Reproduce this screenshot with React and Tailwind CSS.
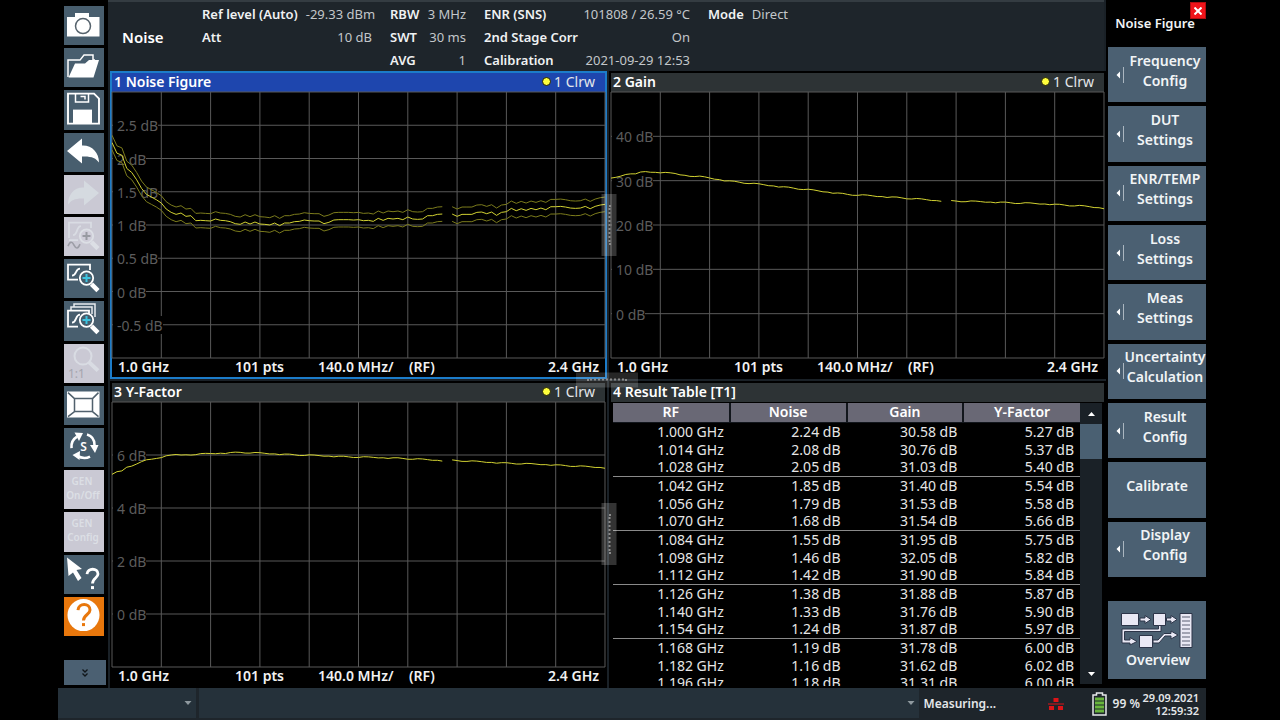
import React from "react";

const CORE = [
  [1.0, 2.24, 30.58, 5.27], [1.014, 2.08, 30.76, 5.37], [1.028, 2.05, 31.03, 5.4],
  [1.042, 1.85, 31.4, 5.54], [1.056, 1.79, 31.53, 5.58], [1.07, 1.68, 31.54, 5.66],
  [1.084, 1.55, 31.95, 5.75], [1.098, 1.46, 32.05, 5.82], [1.112, 1.42, 31.9, 5.84],
  [1.126, 1.38, 31.88, 5.87], [1.14, 1.33, 31.76, 5.9], [1.154, 1.24, 31.87, 5.97],
  [1.168, 1.19, 31.78, 6.0], [1.182, 1.16, 31.62, 6.02], [1.196, 1.18, 31.31, 6.0],
];

const NOISE = [
  ...CORE.slice(0, 14).map((r) => r[1]),
  1.18, 1.13, 1.14, 1.065, 1.07, 1.065, 1.06, 1.09, 1.07, 1.065, 1.05, 1.02, 1.01, 1.045, 1.015, 1.045, 1.015,
  1.01, 1.0, 1.03, 0.99, 1.03, 1.03, 1.05, 1.055, 1.075, 1.065, 1.06, 1.06, 1.02, 1.04, 1.075, 1.08, 1.08,
  1.08, 1.075, 1.08, 1.065, 1.07, 1.055, 1.1, 1.07, 1.1, 1.09, 1.1, 1.08, 1.12, 1.09, 1.085, 1.09, 1.14, 1.14,
  1.16, 1.165, null, 1.165, 1.13, 1.16, 1.16, 1.16, 1.19, 1.195, 1.17, 1.195, 1.145, 1.19, 1.2, 1.25, 1.215,
  1.245, 1.22, 1.25, 1.23, 1.255, 1.23, 1.275, 1.275, 1.28, 1.27, 1.255, 1.25, 1.255, 1.28, 1.245, 1.28, 1.3, 1.31,
];

const WOBBLE = [0, 1, -1, 0.5, -0.5, 1, 0, -1, 0.3, -0.6, 0.8];

function series(column, anchors, wobble) {
  const known = CORE.map((r) => r[column]);
  return Array.from({ length: 101 }, (_, k) => {
    if (k < known.length) return known[k];
    if (k === 68) return null;
    const i = anchors.findIndex((a) => a[0] >= k);
    const [x1, y1] = anchors[i];
    const [x0, y0] = i > 0 ? anchors[i - 1] : [known.length - 1, known[known.length - 1]];
    return y0 + ((y1 - y0) * (k - x0)) / (x1 - x0) + WOBBLE[(k * 7) % WOBBLE.length] * wobble;
  });
}

const GAIN = series(2, [[18, 30.9], [24, 29.9], [38, 28.2], [48, 26.9], [58, 26.2], [66, 25.5], [70, 25.4], [79, 25.1], [89, 24.7], [95, 24.3], [100, 23.8]], 0.13);
const YFACTOR = series(3, [[20, 6.05], [26, 6.1], [38, 6.0], [48, 5.93], [58, 5.88], [67, 5.79], [69, 5.8], [79, 5.7], [89, 5.63], [100, 5.52]], 0.02);

function toPath(values, max, min, offset = 0) {
  let pen = "M";
  let d = "";
  values.forEach((v, k) => {
    if (v === null) {
      pen = "M";
      return;
    }
    d += `${pen}${k} ${(((max - v - offset) / (max - min)) * 100).toFixed(2)}`;
    pen = "L";
  });
  return d;
}

function Plot({ max, min, step, children }) {
  const rows = Math.round((max - min) / step);
  const ticks = Array.from({ length: rows - 1 }, (_, i) => max - step * (i + 1));
  const at = (v) => ((max - v) / (max - min)) * 100;
  return (
    <div className="relative min-h-0 flex-1">
      <svg className="absolute inset-0 h-full w-full overflow-visible" viewBox="0 0 100 100" preserveAspectRatio="none" stroke="#595959" fill="none" aria-hidden="true">
        {Array.from({ length: 11 }, (_, i) => (
          <path key={i} d={`M${i * 10} 0V100`} vectorEffect="non-scaling-stroke" />
        ))}
        {[max, ...ticks, min].map((v) => (
          <path key={v} d={`M0 ${at(v)}H100`} vectorEffect="non-scaling-stroke" />
        ))}
      </svg>
      {ticks.map((v) => (
        <span key={v} className="absolute left-px -translate-y-1/2 bg-black pt-0.5 pl-1 text-[14px] leading-4 whitespace-nowrap text-[#5c5c5c]" style={{ top: `${at(v)}%` }}>
          {v} dB
        </span>
      ))}
      <svg className="absolute inset-0 h-full w-full" viewBox="0 0 100 100" preserveAspectRatio="none" fill="none" aria-hidden="true">
        {children}
      </svg>
    </div>
  );
}

function Trace({ d, dim }) {
  return <path d={d} stroke={dim ? "#7c7c1c" : "#d2d232"} strokeWidth="1" vectorEffect="non-scaling-stroke" />;
}

function Window({ title, trace, active, children }) {
  return (
    <section className={active ? "flex min-h-0 min-w-0 flex-col border-2 border-[#1c7cc9] bg-black" : "flex min-h-0 min-w-0 flex-col border-2 border-black bg-black"}>
      <header className={active ? "flex h-[19px] shrink-0 items-center justify-between bg-[#1e46ae] pr-2.5 pb-0.5 pl-0.5" : "flex h-[19px] shrink-0 items-center justify-between bg-[#2d3335] pr-2.5 pb-0.5 pl-0.5"}>
        <h2 className="text-[14px] leading-[17px] font-semibold text-white">{title}</h2>
        {trace && (
          <span className="flex items-center gap-[3px] text-[14px] leading-[17px] text-[#e4e6ea]">
            <svg className="size-[9px]" viewBox="0 0 9 9" aria-hidden="true">
              <circle cx="4.5" cy="4.5" r="4" fill="#ffff3c" stroke="#1c1c08" />
            </svg>
            {trace}
          </span>
        )}
      </header>
      {children}
    </section>
  );
}

function FrequencyAxis() {
  return (
    <footer className="flex h-[19px] shrink-0 items-center px-1.5 pb-px text-[14px] leading-[18px] font-semibold whitespace-nowrap text-[#f2f2f2]">
      <span className="w-[117px]">1.0 GHz</span>
      <span className="w-[83px]">101 pts</span>
      <span className="w-[91px]">140.0 MHz/</span>
      <span>(RF)</span>
      <span className="ml-auto">2.4 GHz</span>
    </footer>
  );
}

function ResultTable() {
  const cell = (v, n, unit) => `${v.toFixed(n)} ${unit}`;
  return (
    <div className="flex min-h-0 flex-1 pt-px pr-0.5 pl-0.5">
      <div className="relative min-h-0 flex-1 overflow-hidden">
        <table className="absolute inset-x-0 top-0 w-full table-fixed border-collapse text-[14px] leading-[17px] text-[#e6e6e6]">
          <thead>
            <tr className="h-[19px] bg-[#696875] leading-[18px] text-white">
              {["RF", "Noise", "Gain", "Y-Factor"].map((h) => (
                <th key={h} scope="col" className="border-r-2 border-b border-[#12161c] p-0 font-semibold last:border-r-0">{h}</th>
              ))}
            </tr>
          </thead>
          <tbody>
            {CORE.map((r, i) => (
              <tr key={r[0]} className={i % 3 === 2 ? "h-[18px] border-b border-[#8a8a8a] text-right" : "h-[18px] text-right"}>
                <td className="p-0 pr-1.5">{cell(r[0], 3, "GHz")}</td>
                <td className="p-0 pr-1.5">{cell(r[1], 2, "dB")}</td>
                <td className="p-0 pr-1.5">{cell(r[2], 2, "dB")}</td>
                <td className="p-0 pr-1.5">{cell(r[3], 2, "dB")}</td>
              </tr>
            ))}
          </tbody>
        </table>
      </div>
      <div className="mb-0.5 flex w-[22px] flex-col bg-[#1a2127]">
        <button aria-label="Scroll up" className="flex h-[21px] items-center justify-center">
          <svg className="h-1 w-[7px]" viewBox="0 0 7 4"><path d="M0 4L3.500 0L7 4Z" fill="#fff" /></svg>
        </button>
        <div className="h-[35px] bg-[#4a6072]" />
        <button aria-label="Scroll down" className="mt-auto flex h-5 items-center justify-center">
          <svg className="h-1 w-[7px]" viewBox="0 0 7 4"><path d="M0 0L3.500 4L7 0Z" fill="#fff" /></svg>
        </button>
      </div>
    </div>
  );
}

function Readout({ className, rows }) {
  return (
    <dl className={className}>
      {rows.map(([k, v]) => (
        <div key={k} className="flex h-[23px] items-center justify-between gap-2 whitespace-nowrap">
          <dt className="font-semibold text-[#f0f2f3]">{k}</dt>
          <dd className="text-[#c3c7ca]">{v}</dd>
        </div>
      ))}
    </dl>
  );
}

const Lens = ({ plus, faded }) => (
  <>
    <path d="M27.500 25L34 31.500" stroke={faded ? "#dcdfe5" : "#fff"} strokeWidth="4.500" />
    <circle cx="22.500" cy="19" r="6.700" fill={faded ? "#cfcdd9" : "#465d6d"} stroke={faded ? "#dcdfe5" : "#fff"} strokeWidth="1.800" />
    {plus && <path d="M22.500 15V23M18.500 19H26.500" stroke={faded ? "#989aa2" : "#3fc4e0"} strokeWidth="2" />}
  </>
);

const TOOLS = [
  ["Screenshot", "normal", <>
    <path d="M3 11H11V7H25V11H35.500V30.500H3Z" fill="#fff" />
    <circle cx="19" cy="20" r="7.500" fill="#fff" stroke="#56636d" strokeWidth="1.500" />
  </>],
  ["Open", "normal", <>
    <path d="M4 29V12H16L20 7H29V12H31" fill="none" stroke="#fff" strokeWidth="1.500" />
    <path d="M11 15.500H21L25 12H35L29.500 29.500H4.500Z" fill="#fff" />
  </>],
  ["Save", "normal", <>
    <path d="M4 3.500H30L35 8.500V33.500H4Z" fill="none" stroke="#fff" strokeWidth="1.900" />
    <path d="M11.500 3.500V12H24.500V3.500M16.500 6.500H21V9.500" fill="none" stroke="#fff" strokeWidth="1.500" />
    <path d="M9 19.500H28V33.500H9Z" fill="#fff" />
  </>],
  ["Undo", "normal", <path d="M3 18L18 5.500V12.500C28 12 35 19.500 35 29.500C32 25 27 23 18 23.500V30.500Z" fill="#fff" />],
  ["Redo", "off", <path d="M35 18L20 5.500V12.500C10 12 4 19.500 4 29.500C7 25 12 23 20 23.500V30.500Z" fill="#d5dae0" />],
  ["Zoom trace", "off", <>
    <path d="M5 21V5.500H27V11M5 23H14M9 18C14 18 12 9 17 9" fill="none" stroke="#d9dce3" strokeWidth="1.800" />
    <Lens plus faded />
    <path d="M4 29C6 24 8 24 10 28C12 32 14 32 16 27" fill="none" stroke="#9c9da6" strokeWidth="1.600" />
  </>],
  ["Zoom", "normal", <>
    <path d="M14 20.500H4V5.500H26V11M8 16.500C13 16.500 11 9.500 16 9.500" fill="none" stroke="#fff" strokeWidth="1.800" />
    <Lens plus />
  </>],
  ["Multi zoom", "normal", <>
    <path d="M7 9V6H28V13M10 6V3H31V16" fill="none" stroke="#e8ecef" strokeWidth="1.500" />
    <path d="M14 25.500H4V9.500H25V12.500M8 21.500C13 21.500 11 13.500 16 13.500" fill="none" stroke="#fff" strokeWidth="1.800" />
    <Lens plus />
  </>],
  ["Zoom off", "off", <>
    <path d="M25 18L34 26.500" stroke="#d9dce3" strokeWidth="4" />
    <circle cx="19" cy="12" r="8.500" fill="none" stroke="#d9dce3" strokeWidth="2" />
    <text x="4" y="34" fontSize="12" fill="#a5a5ae">1:1</text>
  </>],
  ["Maximize window", "normal", <>
    <path d="M3 5.500H35.500V31.500H3Z" fill="#fff" />
    <path d="M10.500 12.500H28.500V25.500H10.500ZM4 6.500L10.500 12.500M34.500 6.500L28.500 12.500M4 30.500L10.500 25.500M34.500 30.500L28.500 25.500" fill="none" stroke="#51616d" strokeWidth="1.500" />
  </>],
  ["Sequencer", "normal", <>
    <path d="M7.500 20C7 15 9 11 13 8.500M23 6.500C28 8 30.500 12 30.500 17M26 28.500C22 30.500 17 30 13 27.500" fill="none" stroke="#fff" strokeWidth="2.600" />
    <path d="M10.500 4.500L19 5L15 13ZM34.500 17L31 25L26 17ZM16 23L8.500 27L15.500 32Z" fill="#fff" />
    <text x="19.500" y="23" fontSize="12" fontWeight="600" textAnchor="middle" fill="#fff">S</text>
  </>],
  ["GEN On/Off", "off", <g fill="#dcdfe5" fontSize="10" fontWeight="600" textAnchor="middle">
    <text x="18" y="15">GEN</text><text x="19" y="29">On/Off</text>
  </g>],
  ["GEN Config", "off", <g fill="#dcdfe5" fontSize="10" fontWeight="600" textAnchor="middle">
    <text x="18" y="15">GEN</text><text x="19" y="29">Config</text>
  </g>],
  ["Context help", "normal", <>
    <path d="M3 2.500L18 14L12.500 15L17.500 23L14 26L9 17.500L4.500 21Z" fill="#fff" />
    <path d="M23 19C23.500 12.500 34 12.500 34 19C34 23 28.500 23 28.500 28.500" fill="none" stroke="#fff" strokeWidth="2.800" />
    <path d="M27 31H30V34H27Z" fill="#fff" />
  </>],
  ["Help", "accent", <>
    <circle cx="19.500" cy="18" r="16" fill="#fff" />
    <path d="M14 13C14.500 5.500 26 5.500 26 13C26 17.500 19.500 17.500 19.500 23.500" fill="none" stroke="#e8770c" strokeWidth="3" />
    <path d="M18 26H21V29H18Z" fill="#e8770c" />
  </>],
];

const TOOL_STYLE = {
  normal: "flex items-center justify-center bg-[#485e6e]",
  off: "flex items-center justify-center bg-[#cac9d4]",
  accent: "flex items-center justify-center bg-[#e8770c]",
};

const SOFTKEYS = [
  ["Frequency", "Config"], ["DUT", "Settings"], ["ENR/TEMP", "Settings"], ["Loss", "Settings"], ["Meas", "Settings"],
  ["Uncertainty", "Calculation"], ["Result", "Config"], ["Calibrate"], ["Display", "Config"],
];

function Softkey({ lines }) {
  const single = lines.length === 1;
  return (
    <button className="flex min-h-0 items-center bg-[#4b6072] pl-2 text-[14px] leading-5 font-semibold text-[#f1f4f6]">
      {!single && (
        <svg className="h-4 w-2 shrink-0" viewBox="0 0 8 16" aria-hidden="true">
          <path d="M4 4.500V11.500L0.500 8Z" fill="#fff" />
          <path d="M7.500 0V16" stroke="#aab6c0" />
        </svg>
      )}
      <span className={single ? "flex-1 pr-2 pb-2" : "flex-1 pb-2"}>
        {lines.map((l) => <span key={l} className="block">{l}</span>)}
      </span>
    </button>
  );
}

function OverviewIcon() {
  return (
    <svg className="h-9 w-[74px]" viewBox="0 0 74 36" aria-hidden="true">
      <g stroke="#2c3448" fill="#e9e8f4">
        <path d="M1.500 1.500H18.500V13.500H1.500ZM33.500 1.500H45.500V13.500H33.500ZM19.500 23.500H32.500V35.500H19.500Z" />
        <path d="M60 1.500H72V35.500H60Z" />
        <path d="M20 6H25V3.500L31 7.500L25 11.500V9H20ZM46.500 6H51V3.500L57 7.500L51 11.500V9H46.500Z" />
        <path d="M38.500 13.500H41V19.500H4.500V28H10V25.500L17 29.500L10 33V31H2V17H38.500Z" />
        <path d="M33 28H38L44 21.500H51V19L58 23L51 27V24H45L39 31H33Z" />
      </g>
      <path d="M62 5H70M62 9H70M62 13H70M62 17H70M62 21H70M62 25H70M62 29H70M62 33H70" stroke="#5b5f73" />
    </svg>
  );
}

function StatusSelect({ label, className }) {
  return (
    <label className={className}>
      <select aria-label={label} className="h-full w-full appearance-none bg-[#25313a]">
        <option value="" />
      </select>
      <svg className="pointer-events-none absolute top-1/2 right-1 h-[5px] w-2 -translate-y-1/2" viewBox="0 0 8 5" aria-hidden="true"><path d="M0.500 0.500H7.500L4 4.500Z" fill="#8f999f" /></svg>
    </label>
  );
}

export default function App() {
  return (
    <div className="flex h-screen min-h-[640px] min-w-[1100px] flex-col bg-black pr-[74px] pl-[58px] font-['Noto_Sans','Open_Sans',sans-serif]">
      <div className="flex min-h-0 flex-1">
        <nav aria-label="Toolbar" className="flex w-[50px] shrink-0 flex-col pt-1.5 pr-0.5 pb-[3px] pl-1.5">
          <div className="grid min-h-0 flex-1 auto-rows-fr gap-[3px] pr-0.5">
            {TOOLS.map(([name, kind, art]) => (
              <button key={name} aria-label={name} disabled={kind === "off"} className={TOOL_STYLE[kind]}>
                <svg className="h-full w-full" viewBox="0 0 40 39">{art}</svg>
              </button>
            ))}
          </div>
          <button aria-label="More tools" className="mt-6 flex h-[25px] items-center justify-center bg-[#4b6072]">
            <svg className="h-2 w-1.5" viewBox="0 0 6 8"><path d="M0.500 0.500L3 3L5.500 0.500M0.500 4.500L3 7L5.500 4.500" fill="none" stroke="#10161a" strokeWidth="1.300" /></svg>
          </button>
        </nav>

        <main className="flex min-w-0 flex-1 flex-col bg-[#1a2127]">
          <header className="mr-0.5 flex h-[71px] shrink-0 items-stretch gap-[18px] border-t-2 border-[#343c42] bg-[#1e252b] text-[13px] leading-[18px]">
            <h1 className="w-[76px] self-center pl-3.5 text-[15px] font-semibold text-white">Noise</h1>
            <Readout className="w-[170px]" rows={[["Ref level (Auto)", "-29.33 dBm"], ["Att", "10 dB"]]} />
            <Readout className="w-[76px]" rows={[["RBW", "3 MHz"], ["SWT", "30 ms"], ["AVG", "1"]]} />
            <Readout className="w-[206px]" rows={[["ENR (SNS)", "101808 / 26.59 °C"], ["2nd Stage Corr", "On"], ["Calibration", "2021-09-29 12:53"]]} />
            <Readout className="" rows={[["Mode", "Direct"]]} />
          </header>
          <div className="relative grid min-h-0 flex-1 grid-cols-2 grid-rows-[308fr_307fr] gap-0.5 pl-0.5">
            <Window title="1 Noise Figure" trace="1 Clrw" active>
              <Plot max={3} min={-1} step={0.5}>
                <Trace d={toPath(NOISE, 3, -1, 0.11)} dim />
                <Trace d={toPath(NOISE, 3, -1, -0.11)} dim />
                <Trace d={toPath(NOISE, 3, -1)} />
              </Plot>
              <FrequencyAxis />
            </Window>
            <Window title="2 Gain" trace="1 Clrw">
              <Plot max={50} min={-10} step={10}>
                <Trace d={toPath(GAIN, 50, -10)} />
              </Plot>
              <FrequencyAxis />
            </Window>
            <Window title="3 Y-Factor" trace="1 Clrw">
              <Plot max={8} min={-2} step={2}>
                <Trace d={toPath(YFACTOR, 8, -2)} />
              </Plot>
              <FrequencyAxis />
            </Window>
            <Window title="4 Result Table [T1]">
              <ResultTable />
            </Window>
            <div className="absolute top-1/4 left-1/2 ml-0.5 flex h-[62px] w-[15px] -translate-x-1/2 -translate-y-1/2 items-center justify-center bg-white/20">
              <span className="h-10 border-l-2 border-dotted border-[#8c8c8c]" />
            </div>
            <div className="absolute top-3/4 left-1/2 ml-0.5 flex h-[62px] w-[15px] -translate-x-1/2 -translate-y-1/2 items-center justify-center bg-white/20">
              <span className="h-10 border-l-2 border-dotted border-[#8c8c8c]" />
            </div>
            <div className="absolute top-1/2 left-1/2 flex h-[15px] w-[62px] -translate-x-1/2 -translate-y-1/2 items-center justify-center bg-white/15">
              <span className="w-10 border-t-2 border-dotted border-[#8c8c8c]" />
            </div>
          </div>
        </main>

        <aside className="relative flex w-[100px] shrink-0 flex-col pb-[9px] pl-0.5">
          <h2 className="flex h-[47px] shrink-0 items-center justify-center pr-1 pb-0.5 text-[13px] leading-5 font-semibold whitespace-nowrap text-[#f1f4f6]">Noise Figure</h2>
          <button aria-label="Close" className="absolute top-0.5 right-0 flex h-[17px] w-4 items-center justify-center border border-[#b30c10] bg-[#f0141a]">
            <svg className="size-2" viewBox="0 0 8 8"><path d="M0.500 0.500L7.500 7.500M7.500 0.500L0.500 7.500" stroke="#fff" strokeWidth="2" /></svg>
          </button>
          <div className="grid min-h-0 flex-1 auto-rows-fr gap-1">
            {SOFTKEYS.map((k) => <Softkey key={k.join(" ")} lines={k} />)}
          </div>
          <button className="mt-6 flex h-[78px] shrink-0 flex-col items-center bg-[#4b6072] pt-[11px] text-[14px] leading-5 font-semibold text-[#f1f4f6]">
            <OverviewIcon />
            <span className="pt-0.5 pl-0.5">Overview</span>
          </button>
        </aside>
      </div>

      <footer className="flex h-8 shrink-0 items-center bg-[#1e252b] text-[12px] leading-[14px] font-semibold text-[#e4e7e9]">
        <StatusSelect label="Channel" className="relative mr-[3px] mb-0.5 h-[30px] w-[138px]" />
        <StatusSelect label="Status message" className="relative mb-0.5 h-[30px] min-w-0 flex-1" />
        <span className="ml-[5px] w-[124px]">Measuring...</span>
        <svg className="mr-7 h-3 w-4" viewBox="0 0 16 12" aria-label="Network disconnected" role="img">
          <path d="M5.500 0H10.500V4H5.500ZM1 8H6V12H1ZM10 8H15V12H10ZM0 5.500H16V6.500H0Z" fill="#dd1418" />
        </svg>
        <svg className="mr-1.5 h-6 w-[15px]" viewBox="0 0 15 24" aria-label="Battery" role="img">
          <path d="M4.500 1H10.500V3H14V23H1V3H4.500Z" fill="#20282c" stroke="#e6e8ea" strokeWidth="1.500" />
          <path d="M3 5.500H12V8.500H3ZM3 9.500H12V12.500H3ZM3 13.500H12V16.500H3ZM3 17.500H12V20.500H3Z" fill="#68b53c" />
        </svg>
        <span className="w-[30px] whitespace-nowrap">99 %</span>
        <time className="pr-[7px] text-right text-[11px] leading-[13px]">29.09.2021<br />12:59:32</time>
      </footer>
    </div>
  );
}
